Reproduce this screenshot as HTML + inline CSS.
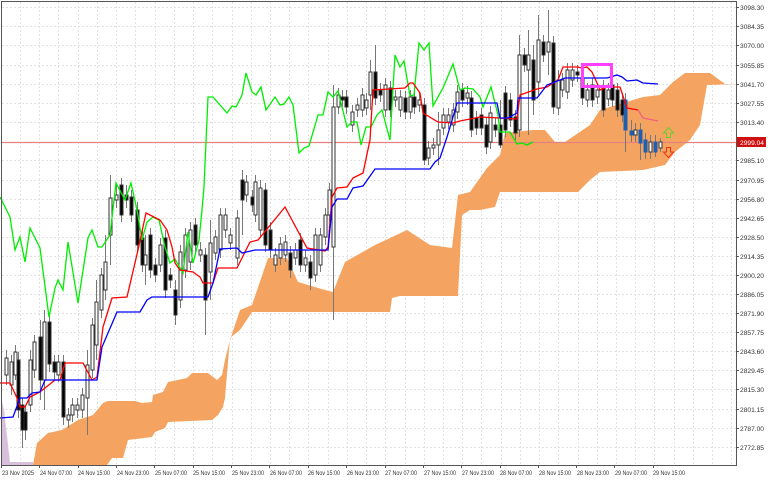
<!DOCTYPE html>
<html><head><meta charset="utf-8"><style>
html,body{margin:0;padding:0;background:#fff;}
svg{display:block;font-family:"Liberation Sans",sans-serif;}
</style></head><body>
<svg width="768" height="480" viewBox="0 0 768 480" xmlns="http://www.w3.org/2000/svg">
<rect width="768" height="480" fill="#fff"/>
<g stroke="#e2e2e2" stroke-width="1" stroke-dasharray="2,2">
<path d="M20.5 2V465M39.5 2V465M58.5 2V465M78.5 2V465M97.5 2V465M116.5 2V465M135.5 2V465M155.5 2V465M174.5 2V465M193.5 2V465M212.5 2V465M232.5 2V465M251.5 2V465M270.5 2V465M289.5 2V465M308.5 2V465M328.5 2V465M347.5 2V465M366.5 2V465M385.5 2V465M405.5 2V465M424.5 2V465M443.5 2V465M462.5 2V465M481.5 2V465M501.5 2V465M520.5 2V465M539.5 2V465M558.5 2V465M578.5 2V465M597.5 2V465M616.5 2V465M635.5 2V465M654.5 2V465M674.5 2V465M693.5 2V465M712.5 2V465M731.5 2V465"/>
<path d="M2 7.5H736M2 26.5H736M2 45.5H736M2 65.5H736M2 84.5H736M2 103.5H736M2 122.5H736M2 160.5H736M2 180.5H736M2 199.5H736M2 218.5H736M2 237.5H736M2 256.5H736M2 275.5H736M2 294.5H736M2 313.5H736M2 332.5H736M2 351.5H736M2 370.5H736M2 389.5H736M2 409.5H736M2 428.5H736M2 447.5H736"/>
</g>
<polygon points="1,397 4,410 10,462 33,462 33,465 1,465" fill="#d8c0dc"/>
<polygon fill="#f4a460" points="33,465 37,443 48,433 62,430 78,420 93,415 103,403 108,401 135,401 142,403 152,402 153,395 163,392 168,382 187,378 192,373 208,373 217,380 222,375 225,360 230,340 240,310 252,305 268,258 287,258 298,282 325,290 333,292 345,262 375,245 407,230 430,245 452,248 458,195 470,192 487,168 500,155 505,133 533,130 545,130 555,142 565,142 590,125 600,110 643,97 660,95 673,82 685,73 710,73 725,84 738,84 707,85 700,125 690,140 675,152 665,165 643,170 600,172 590,180 578,192 500,192 495,207 480,210 470,210 462,215 458,296 400,296 392,298 390,312 252,312 240,330 230,338 225,398 223,407 218,415 212,420 168,422 165,428 155,432 152,437 128,440 123,458 112,458 107,465"/>
<line x1="2" y1="142.5" x2="736" y2="142.5" stroke="#e88080" stroke-width="1.2"/>
<g stroke="#777" stroke-width="1" fill="#fff">
<path d="M6.5 350V385M11.5 355V395M15.5 345V380M18.5 352V418M22.5 398V448M25.5 405V440M30.5 350V412M34.5 335V378M40.5 320V400M44.5 310V410M49.5 315V372M54.5 355V380M58.5 355V382M63.5 355V425M68.5 408V428M72.5 398V422M77.5 398V418M82.5 388V418M87.5 350V435M92.5 318V378M96.5 280V360M101.5 268V318M105.5 235V300M110.5 175V265M116.5 185V208M121.5 178V222M126.5 185V208M131.5 190V222M137.5 202V252M142.5 230V272M145.5 235V285M150.5 228V278M155.5 258V282M160.5 238V272M165.5 230V298M170.5 268V288M175.5 280V325M180.5 245V308M185.5 228V278M190.5 222V270M195.5 218V252M200.5 242V262M205.5 248V335M210.5 220V300M215.5 230V260M220.5 208V258M225.5 208V238M230.5 228V250M237.5 210V265M242.5 170V235M246.5 175V202M252.5 190V212M255.5 175V222M260.5 180V238M265.5 183V252M270.5 222V258M275.5 248V272M280.5 237V265M285.5 235V262M290.5 246V278M295.5 243V265M300.5 233V272M305.5 250V272M310.5 255V290M315.5 228V282M320.5 228V272M325.5 208V245M329.5 183V222M333.5 85V320M338.5 88V114M342.5 90V107M346.5 90V114M352.5 105V132M357.5 98V117M362.5 88V117M366.5 93V115M370.5 60V110M375.5 45V105M380.5 83V102M385.5 78V117M390.5 81V117M395.5 90V107M400.5 90V117M405.5 91V119M410.5 90V119M414.5 90V114M419.5 93V112M424.5 98V165M428.5 141V165M433.5 138V155M438.5 112V165M443.5 108V135M448.5 108V129M453.5 103V132M457.5 85V119M462.5 83V107M467.5 86V105M471.5 91V137M476.5 111V135M481.5 108V135M486.5 118V154M490.5 106V149M495.5 118V137M500.5 100V148M505.5 86V137M510.5 93V127M515.5 110V140M519.5 35V137M524.5 48V72M528.5 30V135M533.5 45V115M538.5 15V95M543.5 35V62M548.5 10V75M553.5 36V114M558.5 70V115M562.5 73V97M567.5 63V99M572.5 63V87M577.5 65V82M582.5 71V105M587.5 83V107M592.5 78V107M597.5 83V104M603.5 80V117M608.5 83V106M612.5 78V107M617.5 83V117M622.5 93V122M625.5 93V152M631.5 120V142M635.5 123V142M640.5 123V160M645.5 133V159M650.5 135V159M655.5 135V157M660.5 138V152"/>
</g>
<g stroke="#333" stroke-width="1">
<g fill="#fff">
<rect x="5" y="358" width="3" height="17"/><rect x="10" y="362" width="3" height="23"/><rect x="14" y="352" width="3" height="23"/><rect x="29" y="360" width="3" height="45"/><rect x="33" y="342" width="3" height="28"/><rect x="43" y="322" width="3" height="58"/><rect x="57" y="362" width="3" height="13"/><rect x="67" y="415" width="3" height="5"/><rect x="71" y="405" width="3" height="10"/><rect x="76" y="405" width="3" height="5"/><rect x="81" y="395" width="3" height="15"/><rect x="86" y="365" width="3" height="33"/><rect x="91" y="325" width="3" height="45"/><rect x="95" y="302" width="3" height="43"/><rect x="100" y="275" width="3" height="35"/><rect x="104" y="262" width="3" height="28"/><rect x="109" y="198" width="3" height="37"/><rect x="115" y="195" width="3" height="5"/><rect x="144" y="255" width="3" height="10"/><rect x="159" y="245" width="3" height="20"/><rect x="179" y="252" width="3" height="48"/><rect x="184" y="235" width="3" height="35"/><rect x="189" y="230" width="3" height="32"/><rect x="199" y="250" width="3" height="5"/><rect x="209" y="243" width="3" height="29"/><rect x="214" y="237" width="3" height="16"/><rect x="219" y="215" width="3" height="35"/><rect x="224" y="215" width="3" height="15"/><rect x="229" y="235" width="3" height="8"/><rect x="236" y="218" width="3" height="40"/><rect x="245" y="182" width="3" height="13"/><rect x="254" y="182" width="3" height="33"/><rect x="259" y="188" width="3" height="42"/><rect x="274" y="255" width="3" height="10"/><rect x="279" y="244" width="3" height="14"/><rect x="284" y="242" width="3" height="13"/><rect x="294" y="250" width="3" height="8"/><rect x="304" y="258" width="3" height="7"/><rect x="314" y="235" width="3" height="40"/><rect x="319" y="235" width="3" height="30"/><rect x="324" y="215" width="3" height="22"/><rect x="328" y="190" width="3" height="25"/><rect x="332" y="107" width="3" height="140"/><rect x="337" y="95" width="3" height="12"/><rect x="351" y="112" width="3" height="13"/><rect x="356" y="105" width="3" height="5"/><rect x="361" y="95" width="3" height="15"/><rect x="365" y="100" width="3" height="8"/><rect x="369" y="72" width="3" height="23"/><rect x="384" y="85" width="3" height="25"/><rect x="394" y="97" width="3" height="3"/><rect x="399" y="97" width="3" height="13"/><rect x="409" y="97" width="3" height="15"/><rect x="418" y="100" width="3" height="5"/><rect x="427" y="148" width="3" height="10"/><rect x="432" y="145" width="3" height="3"/><rect x="437" y="130" width="3" height="15"/><rect x="442" y="115" width="3" height="13"/><rect x="447" y="115" width="3" height="7"/><rect x="452" y="110" width="3" height="15"/><rect x="456" y="92" width="3" height="20"/><rect x="466" y="93" width="3" height="5"/><rect x="489" y="113" width="3" height="29"/><rect x="518" y="55" width="3" height="75"/><rect x="527" y="55" width="3" height="15"/><rect x="537" y="40" width="3" height="42"/><rect x="547" y="42" width="3" height="10"/><rect x="557" y="80" width="3" height="28"/><rect x="561" y="80" width="3" height="10"/><rect x="566" y="70" width="3" height="22"/><rect x="571" y="70" width="3" height="10"/><rect x="586" y="90" width="3" height="10"/><rect x="596" y="90" width="3" height="7"/><rect x="607" y="90" width="3" height="9"/><rect x="634" y="130" width="3" height="5"/><rect x="649" y="142" width="3" height="10"/><rect x="659" y="142" width="3" height="6"/>
</g>
<g fill="#000">
<rect x="17" y="360" width="3" height="50"/><rect x="21" y="405" width="3" height="25"/><rect x="24" y="412" width="3" height="18"/><rect x="39" y="337" width="3" height="43"/><rect x="48" y="322" width="3" height="42"/><rect x="53" y="362" width="3" height="10"/><rect x="62" y="362" width="3" height="55"/><rect x="120" y="185" width="3" height="30"/><rect x="125" y="195" width="3" height="5"/><rect x="130" y="197" width="3" height="18"/><rect x="136" y="210" width="3" height="35"/><rect x="141" y="238" width="3" height="27"/><rect x="149" y="235" width="3" height="35"/><rect x="154" y="265" width="3" height="10"/><rect x="164" y="238" width="3" height="52"/><rect x="169" y="275" width="3" height="5"/><rect x="174" y="290" width="3" height="25"/><rect x="194" y="225" width="3" height="20"/><rect x="204" y="255" width="3" height="45"/><rect x="241" y="180" width="3" height="20"/><rect x="251" y="197" width="3" height="8"/><rect x="264" y="190" width="3" height="55"/><rect x="269" y="230" width="3" height="20"/><rect x="289" y="253" width="3" height="17"/><rect x="299" y="240" width="3" height="25"/><rect x="309" y="262" width="3" height="16"/><rect x="341" y="97" width="3" height="3"/><rect x="345" y="97" width="3" height="10"/><rect x="374" y="72" width="3" height="26"/><rect x="379" y="90" width="3" height="5"/><rect x="389" y="88" width="3" height="22"/><rect x="404" y="98" width="3" height="14"/><rect x="413" y="97" width="3" height="10"/><rect x="423" y="105" width="3" height="55"/><rect x="461" y="90" width="3" height="10"/><rect x="470" y="98" width="3" height="32"/><rect x="475" y="118" width="3" height="10"/><rect x="480" y="115" width="3" height="13"/><rect x="485" y="125" width="3" height="22"/><rect x="494" y="125" width="3" height="5"/><rect x="499" y="125" width="3" height="20"/><rect x="504" y="93" width="3" height="37"/><rect x="509" y="100" width="3" height="20"/><rect x="514" y="117" width="3" height="16"/><rect x="523" y="55" width="3" height="10"/><rect x="532" y="60" width="3" height="40"/><rect x="542" y="42" width="3" height="13"/><rect x="552" y="43" width="3" height="64"/><rect x="576" y="72" width="3" height="3"/><rect x="581" y="78" width="3" height="20"/><rect x="591" y="85" width="3" height="15"/><rect x="602" y="87" width="3" height="23"/><rect x="611" y="85" width="3" height="15"/><rect x="616" y="90" width="3" height="20"/><rect x="621" y="100" width="3" height="15"/>
</g>
<g fill="#1f5fb0" stroke="#1f5fb0">
<rect x="624" y="100" width="3" height="30"/><rect x="630" y="131" width="3" height="4"/><rect x="639" y="130" width="3" height="13"/><rect x="644" y="140" width="3" height="12"/><rect x="654" y="142" width="3" height="10"/>
</g>
</g>
<polyline fill="none" stroke="#00ee00" stroke-width="1.3" points="0,197 10,217 15,250 20,237 25,262 30,228 40,248 49,317 55,288 58,280 63,290 68,242 78,303 88,238 92,230 98,247 102,247 110,235 116,183 125,200 131,183 137,210 142,240 147,222 153,217 159,220 165,247 170,263 175,259 183,273 188,232 193,263 199,240 202,210 204,187 208,97 213,97 227,113 232,106 236,107 242,95 246,73 252,92 256,95 261,87 266,110 275,97 280,105 284,104 289,97 293,105 299,153 304,148 309,146 318,115 323,115 328,92 333,97 338,91 347,127 352,122 357,122 361,145 366,127 371,127 377,115 382,110 390,140 395,55 400,67 404,61 410,96 414,95 419,43 424,50 429,43 433,106 443,88 453,64 460,90 465,88 473,89 480,97 483,107 491,87 498,115 500,132 510,132 517,144 522,143 527,145 533,142"/>
<polyline fill="none" stroke="#ff0000" stroke-width="1.3" points="0,383 10,383 17,398 20,407 25,407 30,397 40,392 55,380 60,380 65,363 83,363 92,380 97,377 103,327 112,298 127,297 138,250 146,213 160,220 167,230 172,247 175,263 180,270 193,272 200,277 203,283 213,283 218,268 237,268 250,242 258,240 285,207 307,248 325,251 328,247 332,197 337,188 347,187 353,178 363,173 370,140 373,90 405,88 410,83 413,83 420,93 423,113 438,122 453,123 460,121 480,117 500,118 517,119 520,95 537,89 547,87 558,80 563,67 577,67 582,68 587,67 592,72 597,83 600,90 607,87 620,87 627,108 638,110"/>
<polyline fill="none" stroke="#f06080" stroke-width="1.3" points="638,110 643,118 658,121"/>
<polyline fill="none" stroke="#0000ff" stroke-width="1.3" points="0,418 13,417 20,398 27,398 32,393 40,392 45,380 97,380 102,347 117,312 140,312 147,300 152,297 208,297 213,283 220,249 237,248 242,253 255,250 328,250 332,207 337,199 347,199 353,188 363,186 375,169 430,169 435,162 440,158 447,137 453,117 457,103 497,103 500,118 508,118 517,113 518,98 537,98 547,85 560,80 565,78 607,78 617,75 622,77 627,81 637,80 643,83 658,84"/>
<rect x="582.5" y="64.5" width="29" height="22" fill="none" stroke="#ff40ff" stroke-width="3"/>
<path d="M668.5 127.5 L673.5 133 L670.5 133 L670.5 137.5 L666.5 137.5 L666.5 133 L663.5 133 Z" fill="none" stroke="#66cc33" stroke-width="1"/>
<path d="M668.5 157.5 L673.5 152 L670.5 152 L670.5 147.5 L666.5 147.5 L666.5 152 L663.5 152 Z" fill="none" stroke="#ee3311" stroke-width="1"/>
<path d="M1.5 1V465.5H736.5V1.5H1" fill="none" stroke="#555" stroke-width="1"/>
<g stroke="#555"><path d="M736 7.5h3M736 26.5h3M736 45.5h3M736 65.5h3M736 84.5h3M736 103.5h3M736 122.5h3M736 160.5h3M736 180.5h3M736 199.5h3M736 218.5h3M736 237.5h3M736 256.5h3M736 275.5h3M736 294.5h3M736 313.5h3M736 332.5h3M736 351.5h3M736 370.5h3M736 389.5h3M736 409.5h3M736 428.5h3M736 447.5h3"/></g>
<g font-size="6.5" fill="#333">
<text x="740" y="10" textLength="24" lengthAdjust="spacingAndGlyphs">3098.30</text><text x="740" y="29" textLength="24" lengthAdjust="spacingAndGlyphs">3084.35</text><text x="740" y="48" textLength="24" lengthAdjust="spacingAndGlyphs">3070.00</text><text x="740" y="68" textLength="24" lengthAdjust="spacingAndGlyphs">3055.85</text><text x="740" y="87" textLength="24" lengthAdjust="spacingAndGlyphs">3041.70</text><text x="740" y="106" textLength="24" lengthAdjust="spacingAndGlyphs">3027.55</text><text x="740" y="125" textLength="24" lengthAdjust="spacingAndGlyphs">3013.40</text><text x="740" y="163" textLength="24" lengthAdjust="spacingAndGlyphs">2985.10</text><text x="740" y="183" textLength="24" lengthAdjust="spacingAndGlyphs">2970.95</text><text x="740" y="202" textLength="24" lengthAdjust="spacingAndGlyphs">2956.80</text><text x="740" y="221" textLength="24" lengthAdjust="spacingAndGlyphs">2942.65</text><text x="740" y="240" textLength="24" lengthAdjust="spacingAndGlyphs">2928.50</text><text x="740" y="259" textLength="24" lengthAdjust="spacingAndGlyphs">2914.35</text><text x="740" y="278" textLength="24" lengthAdjust="spacingAndGlyphs">2900.20</text><text x="740" y="297" textLength="24" lengthAdjust="spacingAndGlyphs">2886.05</text><text x="740" y="316" textLength="24" lengthAdjust="spacingAndGlyphs">2871.90</text><text x="740" y="335" textLength="24" lengthAdjust="spacingAndGlyphs">2857.75</text><text x="740" y="354" textLength="24" lengthAdjust="spacingAndGlyphs">2843.60</text><text x="740" y="373" textLength="24" lengthAdjust="spacingAndGlyphs">2829.45</text><text x="740" y="392" textLength="24" lengthAdjust="spacingAndGlyphs">2815.30</text><text x="740" y="412" textLength="24" lengthAdjust="spacingAndGlyphs">2801.15</text><text x="740" y="431" textLength="24" lengthAdjust="spacingAndGlyphs">2787.00</text><text x="740" y="450" textLength="24" lengthAdjust="spacingAndGlyphs">2772.85</text>
</g>
<rect x="737" y="137" width="29" height="10" fill="#d01010"/>
<text x="740" y="145" font-size="6.5" fill="#fff" textLength="24" lengthAdjust="spacingAndGlyphs">2999.04</text>
<g stroke="#555"><path d="M1.5 465v3M39.5 465v3M78.5 465v3M116.5 465v3M154.5 465v3M193.5 465v3M231.5 465v3M269.5 465v3M308.5 465v3M346.5 465v3M385.5 465v3M423.5 465v3M461.5 465v3M500.5 465v3M538.5 465v3M576.5 465v3M614.5 465v3M653.5 465v3"/></g>
<g font-size="6.5" fill="#333">
<text x="2" y="475" textLength="32" lengthAdjust="spacingAndGlyphs">23 Nov 2025</text><text x="40" y="475" textLength="32" lengthAdjust="spacingAndGlyphs">24 Nov 07:00</text><text x="78" y="475" textLength="32" lengthAdjust="spacingAndGlyphs">24 Nov 15:00</text><text x="117" y="475" textLength="32" lengthAdjust="spacingAndGlyphs">24 Nov 23:00</text><text x="155" y="475" textLength="32" lengthAdjust="spacingAndGlyphs">25 Nov 07:00</text><text x="193" y="475" textLength="32" lengthAdjust="spacingAndGlyphs">25 Nov 15:00</text><text x="232" y="475" textLength="32" lengthAdjust="spacingAndGlyphs">25 Nov 23:00</text><text x="270" y="475" textLength="32" lengthAdjust="spacingAndGlyphs">26 Nov 07:00</text><text x="308" y="475" textLength="32" lengthAdjust="spacingAndGlyphs">26 Nov 15:00</text><text x="347" y="475" textLength="32" lengthAdjust="spacingAndGlyphs">26 Nov 23:00</text><text x="385" y="475" textLength="32" lengthAdjust="spacingAndGlyphs">27 Nov 07:00</text><text x="424" y="475" textLength="32" lengthAdjust="spacingAndGlyphs">27 Nov 15:00</text><text x="462" y="475" textLength="32" lengthAdjust="spacingAndGlyphs">27 Nov 23:00</text><text x="500" y="475" textLength="32" lengthAdjust="spacingAndGlyphs">28 Nov 07:00</text><text x="539" y="475" textLength="32" lengthAdjust="spacingAndGlyphs">28 Nov 15:00</text><text x="577" y="475" textLength="32" lengthAdjust="spacingAndGlyphs">28 Nov 23:00</text><text x="615" y="475" textLength="32" lengthAdjust="spacingAndGlyphs">29 Nov 07:00</text><text x="653" y="475" textLength="32" lengthAdjust="spacingAndGlyphs">29 Nov 15:00</text>
</g>
</svg>
</body></html>
